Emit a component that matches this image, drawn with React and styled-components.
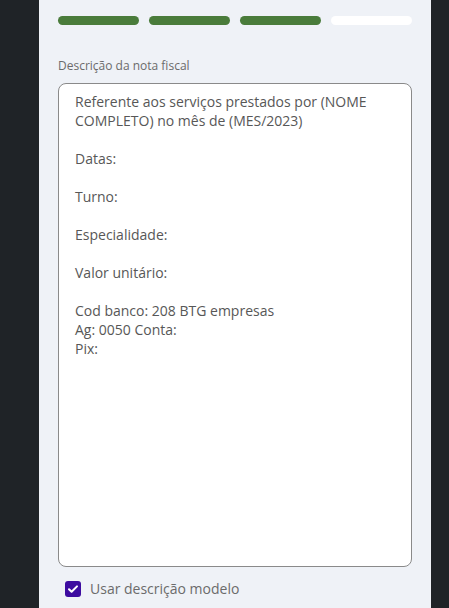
import styled, { createGlobalStyle } from "styled-components";

const GlobalStyle = createGlobalStyle`
  html, body {
    margin: 0;
    padding: 0;
    background: #1f2327;
    font-family: "Open Sans", "Noto Sans", sans-serif;
  }
`;

const Page = styled.div`
  width: 449px;
  height: 608px;
  display: flex;
  overflow: hidden;
`;

const Panel = styled.div`
  margin-left: 39px;
  width: 392px;
  background: #eff2f7;
  padding: 16px 19px 0 19px;
  box-sizing: border-box;
  display: flex;
  flex-direction: column;
`;

const Steps = styled.div`
  display: grid;
  grid-template-columns: repeat(4, 1fr);
  gap: 10px;
`;

const Step = styled.div`
  height: 9px;
  border-radius: 5px;
  background: ${(p) => (p.$done ? "#4a7c3b" : "#ffffff")};
`;

const Label = styled.label`
  margin-top: 33px;
  font-size: 12px;
  color: #6b6b6b;
  line-height: 16px;
`;

const TextArea = styled.textarea`
  margin-top: 9px;
  height: 484px;
  box-sizing: border-box;
  border: 1px solid #8a8a8a;
  border-radius: 8px;
  background: #fff;
  padding: 8px 16px 7px;
  font-family: "Open Sans", "Noto Sans", sans-serif;
  font-size: 14px;
  line-height: 19px;
  color: #575757;
  resize: none;
  outline: none;
`;

const CheckRow = styled.label`
  display: flex;
  align-items: center;
  gap: 9px;
  margin-top: 12px;
  margin-left: 7px;
  font-size: 14px;
  color: #6b6b6b;
`;

const Box = styled.span`
  width: 16px;
  height: 16px;
  border-radius: 3px;
  background: #3d0ca0;
  display: flex;
  align-items: center;
  justify-content: center;
`;

const text = `Referente aos serviços prestados por (NOME COMPLETO) no mês de (MES/2023)

Datas:

Turno:

Especialidade:

Valor unitário:

Cod banco: 208 BTG empresas
Ag: 0050 Conta:
Pix:`;

export default function App() {
  return (
    <Page>
      <GlobalStyle />
      <Panel>
        <Steps>
          <Step $done />
          <Step $done />
          <Step $done />
          <Step />
        </Steps>
        <Label>Descrição da nota fiscal</Label>
        <TextArea defaultValue={text} />
        <CheckRow>
          <Box>
            <svg width="12" height="12" viewBox="0 0 12 12">
              <path d="M2 6.2l2.6 2.6L10 3.4" fill="none" stroke="#fff" strokeWidth="2" strokeLinecap="round" strokeLinejoin="round" />
            </svg>
          </Box>
          Usar descrição modelo
        </CheckRow>
      </Panel>
    </Page>
  );
}
